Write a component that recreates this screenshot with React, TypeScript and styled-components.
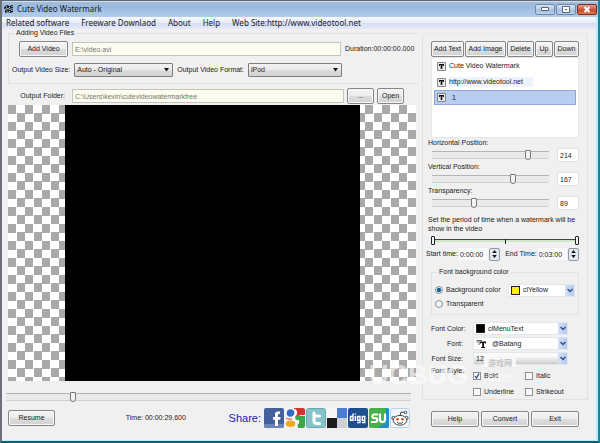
import React from "react";
import styled, { createGlobalStyle, css } from "styled-components";

const GlobalStyle = createGlobalStyle`
  * { box-sizing: border-box; }
  body {
    margin: 0;
    background: #f0f0f0;
    color: #1a1a1a;
    font: 7px/8px "Liberation Sans", Arial, sans-serif;
  }
  button, input, select { font: inherit; color: inherit; margin: 0; }
`;

/* ---------- window frame ---------- */

const Window = styled.div`
  display: flex;
  flex-direction: column;
  min-height: 100vh;
  background: #f0f0f0;
  border: 2px solid #6d7177;
  border-top: 1px solid #5c6873;
  border-right-color: #17869c;
  border-bottom-color: #12606e;
  box-shadow: inset -2px -1px 0 #b5eef6;
`;

const TitleBar = styled.header`
  display: flex;
  align-items: center;
  height: 16px;
  padding: 0 1px 0 2px;
  gap: 3px;
  background: linear-gradient(#a3bbd8, #9cbbe0 40%, #b3cdea);
  box-shadow: inset 0 1px 0 #cfdff0;
`;

const Title = styled.h1`
  flex: 1;
  margin: 0;
  font: 8px/12px "Noto Sans", sans-serif;
  color: #111c2c;
`;

const WindowButtons = styled.div`
  display: flex;
  gap: 1px;
`;

const WindowButton = styled.button<{ $close?: boolean }>`
  display: grid;
  place-items: center;
  width: 20px;
  height: 11px;
  padding: 0;
  border: 1px solid ${(p) => (p.$close ? "#7a2c24" : "#7089a8")};
  border-radius: 2px;
  background: ${(p) =>
    p.$close
      ? "linear-gradient(#e3a08f, #d0553c 50%, #c9401f 50%, #df7d55)"
      : "linear-gradient(#d4e2f2, #b5cbe4 50%, #9fbbdb 50%, #bcd3ec)"};
`;

const MenuBar = styled.nav`
  display: flex;
  align-items: center;
  gap: 12px;
  height: 12px;
  padding-left: 4px;
  margin-right: 2px;
  background: linear-gradient(#f8fafd, #e4eaf6 50%, #d6deef 50%, #e3e9f7);
`;

const MenuItem = styled.a`
  font: 8px/12px "Noto Sans", sans-serif;
  color: #16202e;
  text-decoration: none;
  white-space: nowrap;
`;

const Body = styled.main`
  flex: 1;
  display: grid;
  grid-template-columns: 1fr 166px;
  column-gap: 4px;
  padding: 0 10px 12px 6px;
`;

const Column = styled.div`
  display: flex;
  flex-direction: column;
  min-width: 0;
`;

/* ---------- shared controls ---------- */

const Button = styled.button<{ $width?: number }>`
  ${(p) => p.$width && css`width: ${p.$width}px;`}
  height: 16px;
  padding: 0 1px;
  border: 1px solid #858585;
  border-radius: 2px;
  background: linear-gradient(#f4f4f4, #ececec 50%, #dddddd 50%, #d2d2d2);
  box-shadow: inset 0 0 0 1px #f8f8f8;
  white-space: nowrap;
`;

const PathInput = styled.input`
  flex: 1;
  min-width: 0;
  height: 14px;
  padding: 0 2px;
  border: 1px solid #c4c4b8;
  background: #fdfcf0;
  color: #77776c;
`;

const SelectFrame = styled.span<{ $width?: number; $flat?: boolean; $shaded?: boolean }>`
  position: relative;
  display: flex;
  ${(p) => (p.$width ? css`width: ${p.$width}px;` : css`flex: 1;`)}
  height: ${(p) => (p.$flat ? 13 : 14)}px;
  background: ${(p) =>
    p.$shaded
      ? "linear-gradient(#fafafa 30%, #cccccc)"
      : p.$flat
        ? "#fff"
        : "linear-gradient(#f2f2f2, #eaeaea 50%, #dcdcdc 50%, #d2d2d2)"};
  border: 1px solid ${(p) => (p.$flat ? "#e2e7ee" : "#7f7f7f")};
  border-radius: ${(p) => (p.$flat ? 0 : 1)}px;
`;

const NativeSelect = styled.select<{ $indent?: number }>`
  appearance: none;
  width: 100%;
  padding: 0 12px 0 ${(p) => p.$indent ?? 2}px;
  border: 0;
  background: transparent;
  outline: none;
`;

const Arrow = styled.svg`
  position: absolute;
  top: 4px;
  right: 3px;
  width: 5px;
  height: 4px;
  pointer-events: none;
`;

const ArrowBox = styled.span`
  position: absolute;
  inset: 0 0 0 auto;
  display: grid;
  place-items: center;
  width: 9px;
  background: linear-gradient(90deg, #d5e1fb, #b4c8f2);
  pointer-events: none;
`;

const SelectMark = styled.span`
  position: absolute;
  left: 2px;
  top: 1px;
  display: grid;
  pointer-events: none;
`;

function ComboBox({ id, value, label, width }: { id: string; value: string; label?: string; width?: number }) {
  return (
    <SelectFrame $width={width}>
      <NativeSelect id={id} aria-label={label} defaultValue={value}>
        <option>{value}</option>
      </NativeSelect>
      <Arrow viewBox="0 0 5 4"><path d="M0 0h5L2.500 3.500z" fill="#111" /></Arrow>
    </SelectFrame>
  );
}

function FlatCombo({ id, value, label, width, indent, mark, shaded }: {
  id: string; value: string; label?: string; width: number; indent?: number; mark?: React.ReactNode; shaded?: boolean;
}) {
  return (
    <SelectFrame $width={width} $flat $shaded={shaded}>
      {mark && <SelectMark>{mark}</SelectMark>}
      <NativeSelect id={id} aria-label={label} defaultValue={value} $indent={indent}>
        <option>{value}</option>
      </NativeSelect>
      <ArrowBox>
        <svg width="6" height="5" viewBox="0 0 6 5"><path d="M.5 1 3 3.500 5.500 1" fill="none" stroke="#33507f" strokeWidth="1.500" /></svg>
      </ArrowBox>
    </SelectFrame>
  );
}

const Swatch = styled.span<{ $color: string }>`
  width: 9px;
  height: 9px;
  border: 1px solid #222;
  background: ${(p) => p.$color};
`;

const Slider = styled.input`
  appearance: none;
  flex: 1;
  min-width: 0;
  height: 10px;
  background: linear-gradient(#b4b4b4, #b4b4b4) 0 1px / 100% 1px no-repeat,
    linear-gradient(#d0d0d0, #d0d0d0) 0 8px / 100% 1px no-repeat,
    linear-gradient(#e8ebe9, #e8ebe9) 0 2px / 100% 6px no-repeat;
  &::-webkit-slider-thumb {
    appearance: none;
    width: 6px;
    height: 10px;
    border: 1px solid #777;
    border-radius: 1px 1px 3px 3px;
    background: #f3f3f3;
  }
`;

/* ---------- left column ---------- */

const FileGroup = styled.fieldset`
  min-width: 0;
  margin: 0;
  padding: 4px 3px 6px;
  border: 1px solid #e0e0e0;
  border-right: 0;
`;

const Legend = styled.legend`
  height: 8px;
  margin-left: 3px;
  padding: 0 1px;
  line-height: 8px;
`;

const SourceRow = styled.div`
  display: flex;
  align-items: center;
  gap: 4px;
  padding-left: 7px;
`;

const Duration = styled.span`
  width: 70px;
  white-space: nowrap;
`;

const FormatRow = styled.div`
  display: flex;
  align-items: center;
  gap: 4px;
  margin-top: 6px;
  padding-right: 73px;
  white-space: nowrap;
`;

const FolderRow = styled.div`
  display: flex;
  align-items: center;
  gap: 3px;
  padding: 4px 14px 1px 0;
`;

const FolderLabel = styled.label`
  width: 61px;
  padding-right: 4px;
  text-align: right;
`;

const Preview = styled.div`
  flex: 1;
  display: flex;
  min-height: 120px;
  padding: 0 56px 0 57px;
  margin-right: 2px;
  background: conic-gradient(#fff 25%, #a9a9a9 0 50%, #fff 0 75%, #a9a9a9 0) 0 0 / 17px 17px;
`;

const Video = styled.div`
  flex: 1;
  background: #000;
`;

const SeekRow = styled.div`
  display: flex;
  margin: 11px 7px 0 -2px;
`;

const BottomRow = styled.footer`
  display: flex;
  align-items: center;
  height: 22px;
  margin-top: 5px;
`;

const Clock = styled.time`
  flex: 1;
  text-align: center;
  padding-left: 28px;
`;

const ShareBar = styled.div`
  display: flex;
  align-items: center;
  gap: 1px;
  padding-right: 8px;
`;

const ShareLabel = styled.span`
  margin-right: 2px;
  font-size: 11px;
  line-height: 14px;
  color: #2323a8;
`;

const ShareLink = styled.a`
  display: block;
  width: 20px;
  height: 20px;
  svg { display: block; }
`;

/* ---------- right column ---------- */

const Panel = styled.section`
  position: relative;
  flex: 1;
  margin: 4px 0 0;
  padding: 7px 8px 3px 8px;
  border: 1px solid #e0e3e6;
  border-top-color: #e8e8e8;
`;

const ToolRow = styled.div`
  display: flex;
  justify-content: space-between;
`;

const MarkList = styled.ul`
  height: 81px;
  margin: 0;
  padding: 0 2px;
  list-style: none;
  background: #fff;
  border: 1px solid #e3e6ea;
`;

const MarkItem = styled.li<{ $selected?: boolean }>`
  display: flex;
  align-items: center;
  gap: 3px;
  height: ${(p) => (p.$selected ? 15 : 16)}px;
  padding-left: 2px;
  border: 1px solid ${(p) => (p.$selected ? "#8fa9d6" : "transparent")};
  background: ${(p) => (p.$selected ? "#b9cdf0" : "transparent")};
`;

const MarkText = styled.span<{ $indent?: boolean; $tinted?: boolean }>`
  padding: 1px ${(p) => (p.$tinted ? 10 : 0)}px 1px ${(p) => (p.$indent ? 3 : 0)}px;
  background: ${(p) => (p.$tinted ? "#edf2fb" : "transparent")};
`;

const PropertyLabel = styled.label`
  display: block;
  height: 8px;
  margin-left: -3px;
`;

const PropertyRow = styled.div`
  display: flex;
  align-items: center;
  gap: 8px;
  height: 16px;
  padding-left: 1px;
`;

const Property = styled.div`
  height: 24px;
`;

const Properties = styled.div`
  padding-top: 1px;
`;

const NumberBox = styled.input`
  width: 22px;
  height: 14px;
  padding: 0 2px;
  border: 1px solid #e0e0e0;
  background: #fff;
`;

const PeriodText = styled.p`
  margin: 4px 0 0 -3px;
  line-height: 9px;
`;

const PeriodTrack = styled.div`
  display: grid;
  align-items: center;
  height: 12px;
  margin-top: 1px;
  background: linear-gradient(#222, #222) 50% 5px / 1px 5px no-repeat,
    linear-gradient(#3c463c, #3c463c) 0 5px / 100% 1px no-repeat,
    linear-gradient(#cfe6c8, #cfe6c8) 0 6px / 100% 2px no-repeat;
`;

const PeriodThumb = styled.input`
  grid-area: 1 / 1;
  appearance: none;
  width: 100%;
  height: 9px;
  background: transparent;
  pointer-events: none;
  &::-webkit-slider-thumb {
    appearance: none;
    pointer-events: auto;
    width: 4px;
    height: 9px;
    border: 1px solid #222;
    border-radius: 1px;
    background: #f4f4f4;
  }
`;

const TimeRow = styled.div`
  display: flex;
  align-items: center;
  gap: 1px;
  height: 14px;
  margin: 1px 0 0 -5px;
  white-space: nowrap;
`;

const TimeBox = styled.input`
  flex: 1;
  min-width: 0;
  height: 12px;
  padding: 0 1px;
  border: 0;
  background: #fafafa;
`;

const Spinner = styled.span<{ $last?: boolean }>`
  display: grid;
  width: 11px;
  height: 13px;
  margin-right: ${(p) => (p.$last ? 0 : 4)}px;
  border: 1px solid #8d99a8;
  border-radius: 2px;
  background: #e5e9ef;
`;

const SpinButton = styled.button`
  display: grid;
  place-items: center;
  padding: 0;
  border: 0;
  background: transparent;
  svg { display: block; }
`;

const ColorGroup = styled.fieldset`
  margin: 7px 0 0;
  padding: 7px 3px 3px;
  border: 1px solid #dfe3e7;
`;

const OptionRow = styled.div`
  display: flex;
  align-items: center;
  justify-content: space-between;
  height: 14px;
`;

const Option = styled.label`
  display: flex;
  align-items: center;
  gap: 3px;
`;

const Radio = styled.input`
  appearance: none;
  width: 8px;
  height: 8px;
  border: 1px solid #8b939b;
  border-radius: 50%;
  background: #f4f4f4;
  &:checked { background: radial-gradient(#0d5f96 45%, #d7e9f5 55%); }
`;

const Check = styled.input`
  appearance: none;
  width: 8px;
  height: 8px;
  border: 1px solid #8e8f8f;
  background: #f6f6f6;
  &:checked {
    background: #f6f6f6 url("data:image/svg+xml,%3Csvg xmlns='http://www.w3.org/2000/svg' viewBox='0 0 6 6'%3E%3Cpath d='M1 3l1.500 2L5 .5' fill='none' stroke='%23254390' stroke-width='1.200'/%3E%3C/svg%3E") center / 6px 6px no-repeat;
  }
`;

const FontGrid = styled.div`
  display: grid;
  grid-template-columns: 32px 1fr;
  column-gap: 10px;
  row-gap: 2px;
  align-items: center;
  margin-top: 7px;
  label { text-align: right; white-space: nowrap; }
`;

const StyleLegend = styled.span`
  align-self: start;
  text-align: right;
  white-space: nowrap;
`;

const StyleChecks = styled.div`
  display: grid;
  grid-template-columns: 52px 1fr;
  row-gap: 8px;
  padding-top: 5px;
`;

const ActionRow = styled.div`
  display: flex;
  gap: 2px;
  margin: 11px 9px 2px 9px;
`;

const ActionButton = styled(Button)`
  flex: 1;
`;

const Stamp = styled.div`
  position: absolute;
  left: -54px;
  bottom: 12px;
  display: flex;
  align-items: flex-end;
  gap: 16px;
  color: rgba(255, 255, 255, 0.62);
  font-size: 27px;
  font-weight: bold;
  line-height: 24px;
  pointer-events: none;
`;

const StampSide = styled.span`
  display: grid;
  gap: 2px;
  font-size: 12px;
  line-height: 18px;
`;

const StampTag = styled.span`
  padding: 0 4px;
  background: rgba(255, 255, 255, 0.75);
  color: #c4c4c4;
  font: bold 8px/9px "Noto Sans CJK SC", sans-serif;
`;

/* ---------- drawings ---------- */

const FilmIcon = () => (
  <svg width="10" height="10" viewBox="0 0 10 10">
    <path d="M0 3 3 1l2 1 4-1v3L6 5 4 4 0 5zM1 6l3-1 2 1 3-1v3L6 9 4 8 1 9z" fill="#222" />
    <path d="M2 3h1M5 3.500h1M7.500 2.500h1M2.500 7h1M5 7.500h1M7.500 6.500h1" stroke="#dfe9f4" />
  </svg>
);

const TextIcon = () => (
  <svg width="9" height="9" viewBox="0 0 9 9">
    <path d="M.5.5h8v8h-8z" fill="#e9e9e9" stroke="#888" />
    <path d="M2 2h5v2H6v-.7h-.7V7h-1.600V3.300H3V4H2z" fill="#111" />
  </svg>
);

const TrueTypeIcon = () => (
  <svg width="12" height="10" viewBox="0 0 12 10">
    <path d="M1 3.500V1.500h5M3 1.500V6" fill="none" stroke="#666" />
    <path d="M4 2.500h6v2H9V4H8v4h1v1H5.200V8h1V4H5v.5H4z" fill="#111" />
  </svg>
);

const FacebookIcon = () => (
  <svg width="20" height="20" viewBox="0 0 20 20">
    <rect width="20" height="20" rx="2" fill="#45619d" />
    <path d="M0 16h20v2a2 2 0 0 1-2 2H2a2 2 0 0 1-2-2z" fill="#6d86ba" />
    <path d="M16 3.500h-2c-2.200 0-3 1.200-3 3V9H9v2.800h2V18h3v-6.200h2.200L16.500 9H14V7.200c0-.8.2-1.100 1-1.100h1z" fill="#fff" />
  </svg>
);

const GoogleIcon = () => (
  <svg width="20" height="20" viewBox="0 0 20 20">
    <rect width="20" height="20" rx="2" fill="#f7f7f7" />
    <path d="M9 0h9a2 2 0 0 1 2 2v5H10z" fill="#d8302a" />
    <path d="M12 8h8v10a2 2 0 0 1-2 2h-5z" fill="#3da447" />
    <circle cx="5.500" cy="5" r="3.800" fill="#2f6bc8" />
    <path d="M9.500 1.500c2 2 2 5-.5 7 3 1.500 5 3.500 3.500 7" fill="none" stroke="#fff" strokeWidth="2.400" />
    <circle cx="13" cy="9.500" r="2.800" fill="#3da447" />
    <ellipse cx="5.500" cy="15.800" rx="4.800" ry="3.200" fill="#f0aa22" />
    <path d="M1 10c2 1.500 4 1 6 1" fill="none" stroke="#d8302a" strokeWidth="1" />
  </svg>
);

const TwitterIcon = () => (
  <svg width="20" height="20" viewBox="0 0 20 20">
    <rect x=".5" y=".5" width="19" height="19" rx="2" fill="#84c3c9" stroke="#69a8b0" />
    <path d="M8 5v7.500c0 2 1 3 3 3h2.500M8 8h5.500" fill="none" stroke="#fff" strokeWidth="3" strokeLinecap="round" />
  </svg>
);

const DeliciousIcon = () => (
  <svg width="20" height="20" viewBox="0 0 20 20">
    <path d="M0 0h10v10H0z" fill="#f6f6f6" />
    <path d="M10 0h10v10H10z" fill="#4a7fd0" />
    <path d="M0 10h10v10H0z" fill="#1c1c1c" />
    <path d="M10 10h10v10H10z" fill="#cfd0d8" />
  </svg>
);

const DiggIcon = () => (
  <svg width="20" height="20" viewBox="0 0 20 20">
    <rect width="20" height="20" rx="2" fill="#1d4f8c" />
    <g fill="none" stroke="#fff" strokeWidth="1.400">
      <path d="M5 5.500v6.800H2.500V8.500H5M7.300 8v5M7.300 5.500v1.300M12 8.500H9.500v3.700H12M12 7.800v6.700H9.200M16.800 8.500h-2.500v3.700h2.500M16.800 7.800v6.700H14" />
    </g>
  </svg>
);

const StumbleIcon = () => (
  <svg width="20" height="20" viewBox="0 0 20 20">
    <rect width="20" height="20" rx="2" fill="#46b04a" />
    <path d="M17 0h1a2 2 0 0 1 2 2v16a2 2 0 0 1-2 2H8l9-5z" fill="#2889c4" />
    <path d="M9 6.500H5.200c-2.400 0-2.400 3.600 0 3.600h1.300c2.400 0 2.400 3.900 0 3.900H2M11 5.500v6c0 3.300 5 3.300 5 0v-6" fill="none" stroke="#fff" strokeWidth="2.200" />
  </svg>
);

const RedditIcon = () => (
  <svg width="20" height="20" viewBox="0 0 20 20">
    <rect x=".5" y=".5" width="19" height="19" rx="2" fill="#f1f6fb" stroke="#b9d2e8" />
    <path d="m10 8 1-4 4 .6" fill="none" stroke="#444" />
    <g fill="#fff" stroke="#444">
      <circle cx="15.500" cy="4.500" r="1.300" />
      <circle cx="3.500" cy="10" r="1.600" />
      <circle cx="16.500" cy="10" r="1.600" />
      <ellipse cx="10" cy="12.300" rx="6.700" ry="4.900" />
    </g>
    <circle cx="7.500" cy="11.300" r="1.400" fill="#e5532d" />
    <circle cx="12.500" cy="11.300" r="1.400" fill="#e5532d" />
    <path d="M7 14.300c1.800 1.300 4.200 1.300 6 0" fill="none" stroke="#444" />
  </svg>
);

const SpinUp = () => <svg width="5" height="3" viewBox="0 0 6 4"><path d="M0 4h6L3 0z" fill="#111" /></svg>;
const SpinDown = () => <svg width="5" height="3" viewBox="0 0 6 4"><path d="M0 0h6L3 4z" fill="#111" /></svg>;

/* ---------- data ---------- */

const menu = ["Related software", "Freeware Downlaod", "About", "Help", "Web Site:http://www.videotool.net"];

const shares = [
  { name: "Facebook", Icon: FacebookIcon },
  { name: "Google", Icon: GoogleIcon },
  { name: "Twitter", Icon: TwitterIcon },
  { name: "Delicious", Icon: DeliciousIcon },
  { name: "Digg", Icon: DiggIcon },
  { name: "StumbleUpon", Icon: StumbleIcon },
  { name: "Reddit", Icon: RedditIcon },
];

const properties = [
  { id: "horizontal", label: "Horizontal Position:", value: 84, shown: "214" },
  { id: "vertical", label: "Vertical Position:", value: 70, shown: "167" },
  { id: "transparency", label: "Transparency:", value: 35, shown: "89" },
];

function TimeSpin({ name, last }: { name: string; last?: boolean }) {
  return (
    <Spinner $last={last}>
      <SpinButton aria-label={`Increase ${name}`}><SpinUp /></SpinButton>
      <SpinButton aria-label={`Decrease ${name}`}><SpinDown /></SpinButton>
    </Spinner>
  );
}

export default function App() {
  return (
    <>
      <GlobalStyle />
      <Window>
        <TitleBar>
          <FilmIcon />
          <Title>Cute Video Watermark</Title>
          <WindowButtons>
            <WindowButton aria-label="Minimize">
              <svg width="8" height="4" viewBox="0 0 8 4"><path d="M.5.500h7v3h-7z" fill="#fff" stroke="#54657c" /></svg>
            </WindowButton>
            <WindowButton aria-label="Maximize">
              <svg width="8" height="7" viewBox="0 0 8 7"><path d="M.5.500h7v6h-7z" fill="#fff" stroke="#54657c" /><path d="M3 3h2v1H3z" fill="#54657c" /></svg>
            </WindowButton>
            <WindowButton $close aria-label="Close">
              <svg width="8" height="7" viewBox="0 0 8 7"><path d="m1.500 1 5 5m0-5-5 5" stroke="#fff" strokeWidth="2" /></svg>
            </WindowButton>
          </WindowButtons>
        </TitleBar>
        <MenuBar>
          {menu.map((m) => <MenuItem key={m} href="#">{m}</MenuItem>)}
        </MenuBar>
        <Body>
          <Column>
            <FileGroup>
              <Legend>Adding Video Files</Legend>
              <SourceRow>
                <Button $width={49}>Add Video</Button>
                <PathInput aria-label="Video file" defaultValue="E:\video.avi" />
                <Duration>Duration:00:00:00.000</Duration>
              </SourceRow>
              <FormatRow>
                <label htmlFor="size">Output Video Size:</label>
                <ComboBox id="size" value="Auto - Original" />
                <label htmlFor="format">Output Video Format:</label>
                <ComboBox id="format" value="iPod" width={94} />
              </FormatRow>
            </FileGroup>
            <FolderRow>
              <FolderLabel htmlFor="folder">Output Folder:</FolderLabel>
              <PathInput id="folder" defaultValue="C:\Users\kevin\cutevideowatermarkfree" />
              <Button $width={27}>...</Button>
              <Button $width={27}>Open</Button>
            </FolderRow>
            <Preview><Video /></Preview>
            <SeekRow><Slider type="range" aria-label="Seek" defaultValue={16} /></SeekRow>
            <BottomRow>
              <Button $width={47}>Resume</Button>
              <Clock>Time: 00:00:29.600</Clock>
              <ShareBar>
                <ShareLabel>Share:</ShareLabel>
                {shares.map(({ name, Icon }) => (
                  <ShareLink key={name} href="#" aria-label={name}><Icon /></ShareLink>
                ))}
              </ShareBar>
            </BottomRow>
          </Column>

          <Column>
            <Panel>
              <ToolRow>
                <Button $width={33}>Add Text</Button>
                <Button $width={41}>Add Image</Button>
                <Button $width={27}>Delete</Button>
                <Button $width={18}>Up</Button>
                <Button $width={25}>Down</Button>
              </ToolRow>
              <MarkList>
                <MarkItem><TextIcon /><MarkText>Cute Video Watermark</MarkText></MarkItem>
                <MarkItem><TextIcon /><MarkText $tinted>http://www.videotool.net</MarkText></MarkItem>
                <MarkItem $selected><TextIcon /><MarkText $indent>1</MarkText></MarkItem>
              </MarkList>
              <Properties>
                {properties.map((p) => (
                  <Property key={p.id}>
                    <PropertyLabel htmlFor={p.id}>{p.label}</PropertyLabel>
                    <PropertyRow>
                      <Slider type="range" id={p.id} defaultValue={p.value} />
                      <NumberBox aria-label={`${p.label} value`} defaultValue={p.shown} />
                    </PropertyRow>
                  </Property>
                ))}
              </Properties>
              <PeriodText>Set the period of time when a watermark will be show in the video</PeriodText>
              <PeriodTrack>
                <PeriodThumb type="range" aria-label="Period start" defaultValue={0} />
                <PeriodThumb type="range" aria-label="Period end" defaultValue={100} />
              </PeriodTrack>
              <TimeRow>
                <label htmlFor="start">Start time:</label>
                <TimeBox id="start" defaultValue="0:00:00" />
                <TimeSpin name="start time" />
                <label htmlFor="end">End Time:</label>
                <TimeBox id="end" defaultValue="0:03:00" />
                <TimeSpin name="end time" last />
              </TimeRow>
              <ColorGroup>
                <Legend>Font background color</Legend>
                <OptionRow>
                  <Option><Radio type="radio" name="background" defaultChecked />Background color</Option>
                  <FlatCombo id="background" label="Background color" value="clYellow" width={67} indent={14} mark={<Swatch $color="#fff200" />} />
                </OptionRow>
                <OptionRow>
                  <Option><Radio type="radio" name="background" />Transparent</Option>
                </OptionRow>
              </ColorGroup>
              <FontGrid>
                <label htmlFor="fontColor">Font Color:</label>
                <FlatCombo id="fontColor" value="clMenuText" width={95} indent={14} mark={<Swatch $color="#000" />} />
                <label htmlFor="font">Font:</label>
                <FlatCombo id="font" value="@Batang" width={95} indent={18} mark={<TrueTypeIcon />} />
                <label htmlFor="fontSize">Font Size:</label>
                <FlatCombo id="fontSize" value="12" width={95} shaded />
                <StyleLegend>Font Style:</StyleLegend>
                <StyleChecks>
                  <Option><Check type="checkbox" defaultChecked />Bold</Option>
                  <Option><Check type="checkbox" />Italic</Option>
                  <Option><Check type="checkbox" />Underline</Option>
                  <Option><Check type="checkbox" />Strikeout</Option>
                </StyleChecks>
              </FontGrid>
              <Stamp>
                UCBUG
                <StampSide><StampTag>游戏网</StampTag>.com</StampSide>
              </Stamp>
            </Panel>
            <ActionRow>
              <ActionButton>Help</ActionButton>
              <ActionButton>Convert</ActionButton>
              <ActionButton>Exit</ActionButton>
            </ActionRow>
          </Column>
        </Body>
      </Window>
    </>
  );
}
